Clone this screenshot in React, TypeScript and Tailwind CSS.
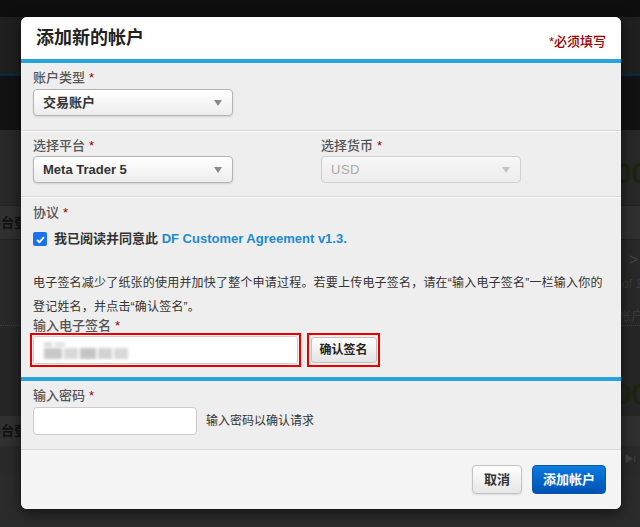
import React from 'react'

const Req = () => <span className="ml-[4px] text-[#a00000]">*</span>

function FakeSelect({ value, disabled }: { value: string; disabled?: boolean }) {
  return (
    <div
      className={
        disabled
          ? 'relative h-[27px] w-[200px] rounded-[4px] border border-[#cfcfcf] bg-gradient-to-b from-[#f7f7f7] to-[#ececec] pl-[9px] text-[13px] leading-[25px] tracking-[0.5px] text-[#a8a8a8]'
          : 'relative h-[27px] w-[200px] rounded-[4px] border border-[#b4b4b4] bg-gradient-to-b from-white to-[#ededed] pl-[9px] text-[13px] font-bold leading-[25px] text-[#333] shadow-[0_1px_2px_rgba(0,0,0,0.12)]'
      }
    >
      {value}
      <span
        className={
          'absolute right-[10px] top-[10px] h-0 w-0 border-x-[4px] border-t-[6px] border-x-transparent ' +
          (disabled ? 'border-t-[#c4c4c4]' : 'border-t-[#8a8a8a]')
        }
      />
    </div>
  )
}

function Backdrop() {
  return (
    <div className="flex h-[527px] flex-col bg-[#262626] text-[#111]">
      <div className="h-[17px] bg-[#0e0e0e]" />
      <div className="h-[56px] bg-[#1f1f1f]" />
      <div className="h-[3px] bg-[#0b2a38]" />
      <div className="h-[54px] bg-[#121212]" />
      <div className="flex h-[75px] items-center justify-end bg-[#282828] pt-[10px]">
        <span className="mr-[-8px] text-[30px] font-bold text-[#1b2510]">1,000.00</span>
      </div>
      <div className="flex h-[35px] items-center justify-between border-y border-[#222] bg-[#303030]">
        <span className="ml-[-12px] text-[13px] font-bold text-[#111]">平台登录</span>
      </div>
      <div className="flex h-[32px] items-end justify-end bg-[#282828] pr-[2px] text-[16px] text-[#444]">
        &gt;
      </div>
      <div className="flex h-[24px] items-center justify-end bg-[#282828] text-[12px] text-[#3a3a3a]">
        <span className="mr-[-2px]">of 1</span>
      </div>
      <div className="flex h-[30px] items-end justify-end border-b border-dotted border-[#3c3c3c] bg-[#282828] text-[13px] text-[#3a3a3a]">
        <span className="mr-[-4px]">帐户</span>
      </div>
      <div className="flex h-[90px] items-end justify-end bg-[#262626]">
        <span className="mr-[-8px] text-[30px] font-bold text-[#1b2510]">1,000.00</span>
      </div>
      <div className="flex h-[30px] items-center bg-[#303030]">
        <span className="ml-[-12px] text-[13px] font-bold text-[#111]">平台登录</span>
      </div>
      <div className="flex h-[28px] items-center justify-end bg-[#2a2a2a] pr-[4px] text-[9px] text-[#444]">▶I</div>
      <div className="flex-1 bg-[#2b2b2b]" />
    </div>
  )
}

export default function App() {
  return (
    <div className="relative h-[527px] w-[640px] overflow-hidden font-['Liberation_Sans','Noto_Sans_CJK_SC',sans-serif]">
      <Backdrop />

      <div className="absolute inset-0 flex pl-[21px] pt-[17px]">
        <div className="flex h-[492px] w-[600px] flex-col overflow-hidden rounded-[6px] bg-[#eeeeee] shadow-[0_3px_14px_rgba(0,0,0,0.6)]">
          {/* header */}
          <div className="flex h-[46px] items-start justify-between border-b-[4px] border-[#27a4dd] bg-white px-[15px]">
            <h2 className="pt-[9px] text-[18px] font-bold leading-[24px] text-[#222]">添加新的帐户</h2>
            <span className="pt-[16px] text-[13px] font-medium leading-[18px] text-[#9a0000]">*必须填写</span>
          </div>

          {/* account type */}
          <div className="border-b border-[#d9d9d9] px-[12px] pb-[14px] pt-[7px] shadow-[0_1px_0_#fafafa]">
            <label className="block text-[13px] font-medium leading-[16px] text-[#555]">
              账户类型<Req />
            </label>
            <div className="mt-[3px]">
              <FakeSelect value="交易账户" />
            </div>
          </div>

          {/* platform + currency */}
          <div className="grid grid-cols-[288px_200px] border-b border-[#d9d9d9] px-[12px] pb-[13px] pt-[7px] shadow-[0_1px_0_#fafafa]">
            <div>
              <label className="block text-[13px] font-medium leading-[16px] text-[#555]">
                选择平台<Req />
              </label>
              <div className="mt-[2px]">
                <FakeSelect value="Meta Trader 5" />
              </div>
            </div>
            <div>
              <label className="block text-[13px] font-medium leading-[16px] text-[#555]">
                选择货币<Req />
              </label>
              <div className="mt-[2px]">
                <FakeSelect value="USD" disabled />
              </div>
            </div>
          </div>

          {/* agreement + signature */}
          <div className="border-b-[4px] border-[#27a4dd] px-[12px] pb-[10px] pt-[8px]">
            <label className="block text-[13px] font-medium leading-[16px] text-[#555]">
              协议<Req />
            </label>
            <div className="mt-[8px] flex h-[20px] items-center gap-[7px]">
              <span className="flex h-[14px] w-[14px] items-center justify-center rounded-[2px] bg-[#1a73e8]">
                <svg viewBox="0 0 12 12" className="h-[11px] w-[11px]">
                  <path d="M2.2 6.3 L4.9 8.9 L9.8 3.4" fill="none" stroke="#fff" strokeWidth="1.9" />
                </svg>
              </span>
              <span className="text-[13px] font-bold text-[#333]">
                我已阅读并同意此 <span className="text-[#1b8ad0]">DF Customer Agreement v1.3.</span>
              </span>
            </div>
            <p className="mt-[22px] whitespace-nowrap text-[12px] leading-[24px] tracking-[0.2px] text-[#333]">
              电子签名减少了纸张的使用并加快了整个申请过程。若要上传电子签名，请在“输入电子签名”一栏输入你的
              <br />
              登记姓名，并点击“确认签名”。
            </p>
            <label className="block text-[13px] font-medium leading-[14px] text-[#555]">
              输入电子签名<Req />
            </label>
            <div className="ml-[-3px] flex items-start gap-[6px]">
              <div className="border-2 border-[#e60000] p-px">
                <div className="flex h-[28px] w-[265px] flex-col justify-center gap-[1px] rounded-[3px] border border-[#cfcfcf] bg-white pl-[10px]">
                  <div className="flex gap-[3px] blur-[1.5px]">
                    <span className="h-[5px] w-[8px] bg-[#ddd]" />
                    <span className="h-[5px] w-[10px] bg-[#e3e3e3]" />
                  </div>
                  <div className="flex gap-[2px] blur-[1.5px]">
                    <span className="h-[11px] w-[18px] bg-[#c8c8c8]" />
                    <span className="h-[11px] w-[14px] bg-[#d8d8d8]" />
                    <span className="h-[11px] w-[16px] bg-[#c4c4c4]" />
                    <span className="h-[11px] w-[14px] bg-[#d2d2d2]" />
                    <span className="h-[11px] w-[14px] bg-[#d8d8d8]" />
                  </div>
                </div>
              </div>
              <div className="flex h-[34px] w-[73px] items-center justify-center border-2 border-[#e60000]">
                <button className="h-[26px] w-[66px] rounded-[3px] border border-[#c2c2c2] bg-gradient-to-b from-white to-[#e4e4e4] text-[12px] font-bold text-[#222]">
                  确认签名
                </button>
              </div>
            </div>
          </div>

          {/* password */}
          <div className="border-b border-[#d9d9d9] px-[12px] pb-[14px] pt-[8px]">
            <label className="block text-[13px] font-medium leading-[14px] text-[#555]">
              输入密码<Req />
            </label>
            <div className="mt-[4px] flex items-center gap-[9px]">
              <input
                type="password"
                className="h-[28px] w-[164px] rounded-[4px] border border-[#cccccc] bg-white px-[6px] outline-none"
              />
              <span className="text-[12px] text-[#333]">输入密码以确认请求</span>
            </div>
          </div>

          {/* footer */}
          <div className="flex flex-1 items-center justify-end gap-[10px] bg-[#f4f4f4] px-[15px]">
            <button className="h-[29px] w-[50px] rounded-[4px] border border-[#c4c4c4] bg-gradient-to-b from-white to-[#e6e6e6] text-[13px] font-bold text-[#333] shadow-[0_1px_2px_rgba(0,0,0,0.1)]">
              取消
            </button>
            <button className="h-[29px] w-[74px] rounded-[4px] border border-[#0a57b0] bg-gradient-to-b from-[#0d7ae0] to-[#0052b4] text-[13px] font-bold text-white">
              添加帐户
            </button>
          </div>
        </div>
      </div>
    </div>
  )
}
